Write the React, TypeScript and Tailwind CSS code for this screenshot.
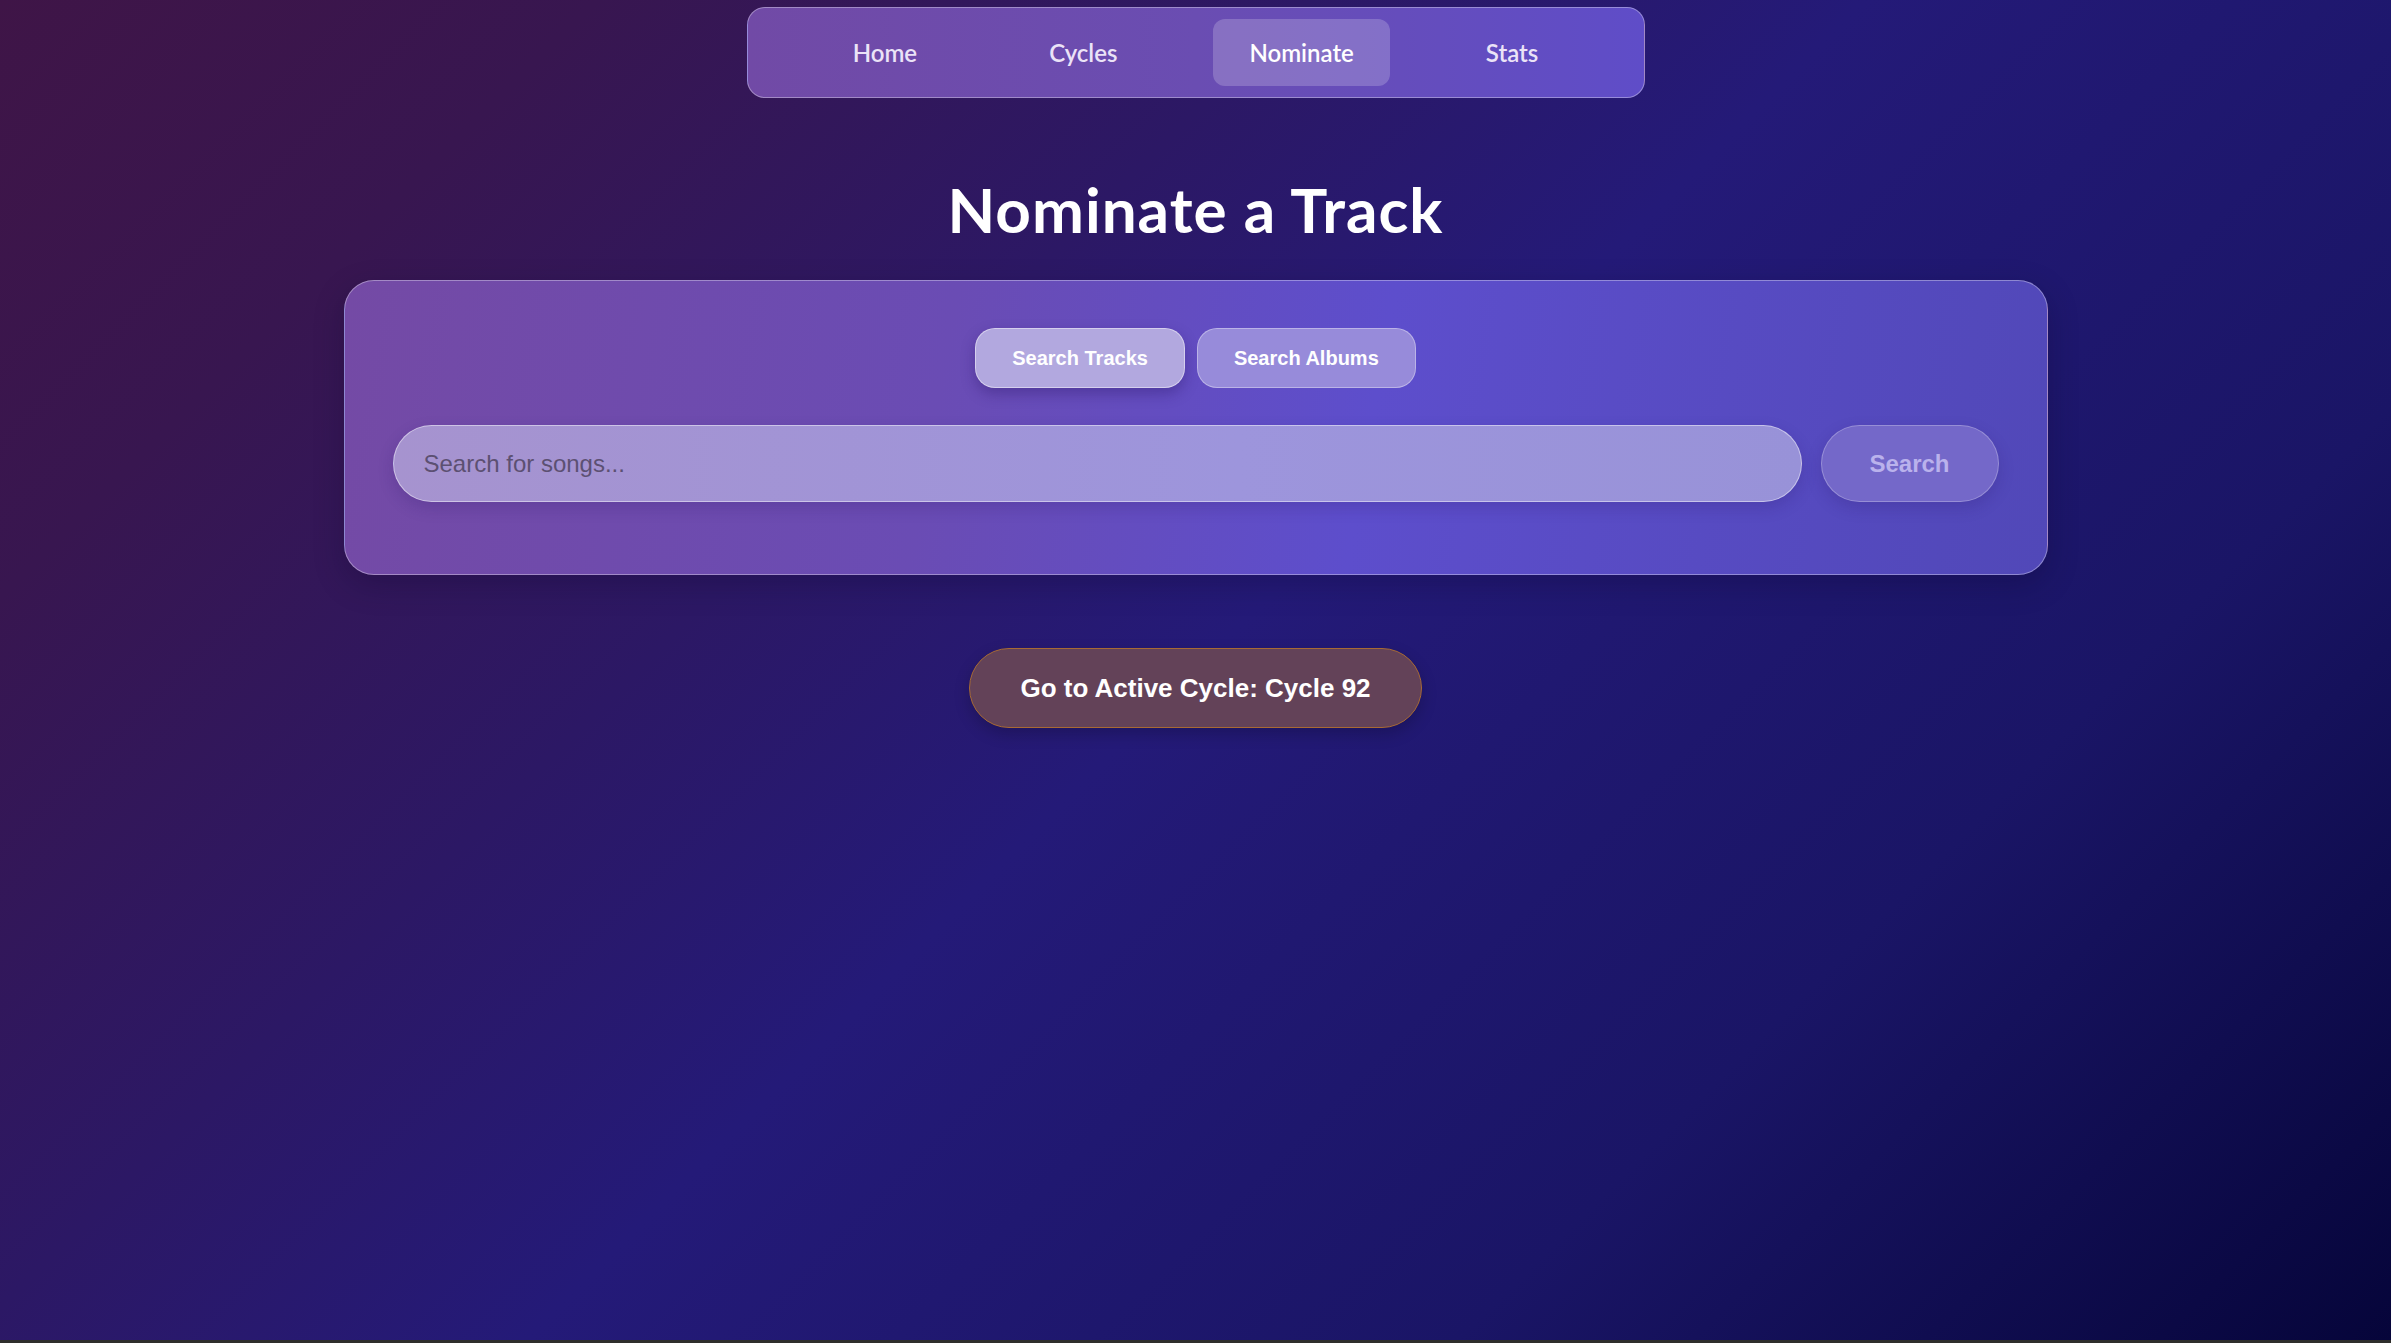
import React from "react";

const navItems = ["Home", "Cycles", "Nominate", "Stats"];

export default function App() {
  return (
    <div className="w-full bg-[#1a1a1a]">
      <div className="flex h-[1340px] w-full flex-col items-center bg-[linear-gradient(135deg,#3f1547_0%,#381650_16%,#2c1865_35%,#241a78_50%,#1a1566_75%,#06053a_100%)] font-['Lato','Open_Sans',sans-serif]">
        <nav className="mt-[7px] flex h-[91px] w-[898px] items-center justify-center gap-[60px] rounded-[18px] border-[1.5px] border-white/35 bg-[linear-gradient(90deg,#714aa6_0%,#6a4db2_50%,#5f4dc8_100%)]">
          {navItems.map((item) => (
            <a
              key={item}
              className={
                item === "Nominate"
                  ? "flex h-[67px] items-center rounded-[12px] bg-white/20 px-[36px] text-[24px] font-semibold text-white"
                  : "flex h-[67px] items-center rounded-[12px] px-[36px] text-[24px] font-semibold text-[#ebe3f7]"
              }
            >
              {item}
            </a>
          ))}
        </nav>

        <h1 className="mb-[35px] mt-[75px] text-[62px] font-bold leading-[72px] tracking-[1px] text-white">
          Nominate a Track
        </h1>

        <div className="w-[1704px] rounded-[30px] border-[1.5px] border-white/35 bg-[linear-gradient(100deg,#744aa5_0%,#6a4cb4_35%,#5d4ecc_60%,#5148b8_100%)] px-[48px] pb-[72px] pt-[47px] shadow-[0_10px_30px_rgba(10,5,40,0.25)]">
          <div className="flex justify-center gap-[12px] font-['Liberation_Sans',Arial,sans-serif]">
            <button className="h-[60px] rounded-[20px] border-[1.5px] border-white/45 bg-[#b2a8df] px-[36px] text-[20px] font-bold text-white shadow-[0_6px_14px_rgba(40,20,100,0.35)]">
              Search Tracks
            </button>
            <button className="h-[60px] rounded-[20px] border-[1.5px] border-white/35 bg-[#978bda] px-[36px] text-[20px] font-bold text-white">
              Search Albums
            </button>
          </div>

          <div className="mt-[37px] flex gap-[19px] font-['Liberation_Sans',Arial,sans-serif]">
            <input
              type="text"
              placeholder="Search for songs..."
              className="h-[77px] flex-1 rounded-full border-[1.5px] border-white/45 bg-[linear-gradient(90deg,#a693cf_0%,#9d95dc_60%,#9892d8_100%)] px-[30px] text-[24px] text-[#2d2540] shadow-[0_6px_16px_rgba(40,20,100,0.2)] outline-none placeholder:text-[#5c5072]"
            />
            <button className="h-[77px] w-[178px] rounded-full border-[1.5px] border-white/25 bg-[#7468c9] text-[24px] font-bold text-[#bab2ec] shadow-[0_6px_16px_rgba(40,20,100,0.2)]">
              Search
            </button>
          </div>
        </div>

        <button className="mt-[73px] h-[80px] rounded-full border-[1.5px] border-[#a86a34] bg-[#634258] px-[50px] font-['Liberation_Sans',Arial,sans-serif] text-[26px] font-bold text-white shadow-[0_6px_16px_rgba(0,0,0,0.2)]">
          Go to Active Cycle: Cycle 92
        </button>
      </div>
      <div className="h-[3px] w-full bg-[#2f2f2c]" />
    </div>
  );
}
